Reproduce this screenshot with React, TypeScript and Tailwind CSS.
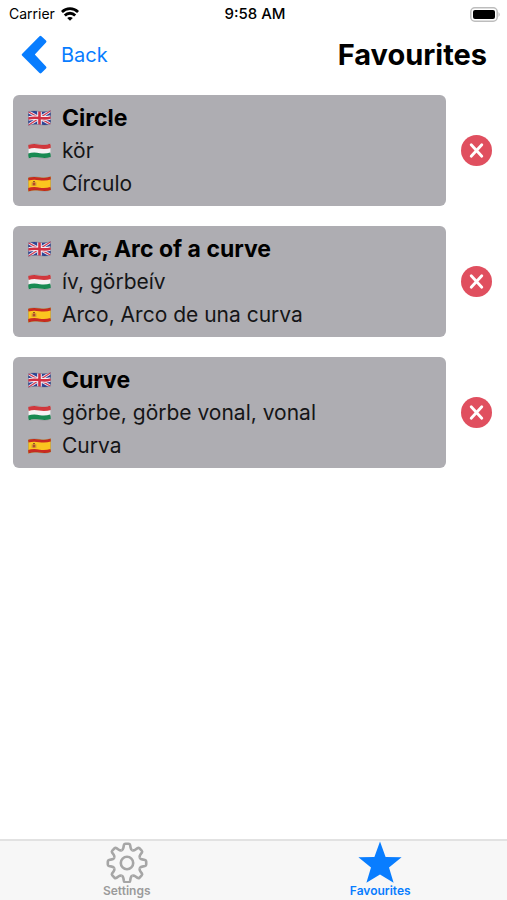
import React from "react";

type Language = "en" | "hu" | "es";

interface Favourite {
  id: number;
  en: string;
  hu: string;
  es: string;
}

const favourites: Favourite[] = [
  { id: 1, en: "Circle", hu: "kör", es: "Círculo" },
  { id: 2, en: "Arc, Arc of a curve", hu: "ív, görbeív", es: "Arco, Arco de una curva" },
  { id: 3, en: "Curve", hu: "görbe, görbe vonal, vonal", es: "Curva" },
];

const languages: Language[] = ["en", "hu", "es"];

// outline of a waving flag, shared by all three
const WAVE = "M0.3 1.8 C4 0.6 7.5 0.7 11.5 1.4 S19.5 1.8 22.7 0.6 V14 C19 15.4 15.5 15.3 11.5 14.6 S3.5 14.2 0.3 15.4 Z";

const Flag = ({ language, id }: { language: Language; id: string }) => {
  return (
    <svg viewBox="0 0 23 16" className="h-4 w-[23px] shrink-0" aria-hidden="true">
      <clipPath id={id}>
        <path d={WAVE} />
      </clipPath>
      <g clipPath={`url(#${id})`}>
        {language === "en" && (
          <>
            <rect width="23" height="16" fill="#2f4595" />
            <path d="M0 1.5 L23 14.5 M23 0.5 L0 15.5" stroke="#e9e6f0" strokeWidth="3" />
            <path d="M0 1.5 L23 14.5 M23 0.5 L0 15.5" stroke="#d13b50" strokeWidth="1.2" />
            <path d="M11.5 0 V16 M0 8.6 C4 7.4 7.5 7.5 11.5 8 S19.5 8.6 23 7.4" stroke="#f1eef5" strokeWidth="4.6" fill="none" />
            <path d="M11.5 0 V16 M0 8.6 C4 7.4 7.5 7.5 11.5 8 S19.5 8.6 23 7.4" stroke="#d02f43" strokeWidth="2.6" fill="none" />
          </>
        )}
        {language === "hu" && (
          <>
            <rect width="23" height="16" fill="#f4f3f4" />
            <path d="M0 3.8 C4 2.6 7.5 2.7 11.5 3.4 S19.5 3.8 23 2.6" stroke="#d2383d" strokeWidth="4.4" fill="none" />
            <path d="M0 13 C4 11.8 7.5 11.9 11.5 12.6 S19.5 13 23 11.8" stroke="#188a52" strokeWidth="5" fill="none" />
          </>
        )}
        {language === "es" && (
          <>
            <rect width="23" height="16" fill="#fbc51f" />
            <path d="M0 3 C4 1.8 7.5 1.9 11.5 2.6 S19.5 3 23 1.8" stroke="#c92a22" strokeWidth="3.2" fill="none" />
            <path d="M0 13.8 C4 12.6 7.5 12.7 11.5 13.4 S19.5 13.8 23 12.6" stroke="#c92a22" strokeWidth="3.6" fill="none" />
            <path d="M4.2 6.4 V10 M7.8 6.4 V10" stroke="#a77b4a" strokeWidth="0.7" />
            <path d="M4.8 6.4 H7.2 V9 Q6 10.6 4.8 9 Z" fill="#b5442c" />
            <path d="M5 5.5 H7" stroke="#8d5a2a" strokeWidth="1" />
          </>
        )}
      </g>
      <path d={WAVE} fill="none" stroke="#000" strokeOpacity="0.2" strokeWidth="0.6" />
    </svg>
  );
};

const GearIcon = () => {
  return (
    <svg viewBox="-21 -22 42 42" className="size-[42px]" fill="none" stroke="#a6a6a6" strokeWidth="2.6" aria-hidden="true">
      {[0, 45, 90, 135, 180, 225, 270, 315].map((angle) => (
        <path
          key={angle}
          transform={`rotate(${angle})`}
          d="M-5.3 -12.8 C-4.2 -13.3 -3.8 -14 -3.6 -15.2 L-3.1 -18 Q-2.8 -19.2 -1.6 -19.2 H1.6 Q2.8 -19.2 3.1 -18 L3.6 -15.2 C3.8 -14 4.2 -13.3 5.3 -12.8"
        />
      ))}
      <circle r="6.2" />
    </svg>
  );
};

const StatusBar = () => {
  return (
    <div className="grid h-7 grid-cols-3 items-center pr-[6px] pl-[9px] text-[14px] leading-5">
      <div className="flex items-center gap-[6px]">
        <span>Carrier</span>
        <svg viewBox="0 0 18 14" className="h-[14px] w-[18px]" fill="none" stroke="#000" strokeWidth="2.8" aria-label="Wi-Fi">
          <path d="M0.9 5 C5.4 0.4 12.6 0.4 17.1 5" />
          <path d="M3.8 8.4 C6.7 5.5 11.3 5.5 14.2 8.4" />
          <path d="M9 13.8 L6.2 11 C7.8 9.5 10.2 9.5 11.8 11 Z" fill="#000" stroke="none" />
        </svg>
      </div>
      <span className="text-center text-[15px] font-medium">9:58 AM</span>
      <svg viewBox="0 0 31 15" className="h-[15px] w-[31px] justify-self-end" aria-label="Battery full">
        <rect x="0.8" y="0.8" width="26.4" height="13.4" rx="4" fill="#fff" stroke="#bdbdbd" strokeWidth="1.5" />
        <rect x="3" y="3" width="22" height="9" rx="2" fill="#000" />
        <path d="M28.5 5 Q31 7.5 28.5 10 Z" fill="#bdbdbd" />
      </svg>
    </div>
  );
};

const Header = () => {
  return (
    <header className="flex h-[53px] items-center justify-between pr-5 pl-[21px]">
      <button type="button" className="flex items-center gap-[14px] text-[20px] leading-6 text-[#087dff]">
        <svg viewBox="0 0 26 40" className="h-10 w-[26px]" fill="#087dff" aria-hidden="true">
          <path d="M1 19 L18.5 1.2 Q19.5 0.4 20.4 1.2 L25 5.6 Q26 6.6 25 7.6 L13.8 19.4 L25 31.4 Q26 32.4 25 33.4 L20.4 38 Q19.5 38.8 18.5 38 L1 20.6 Q0.3 19.8 1 19 Z" />
        </svg>
        Back
      </button>
      <h1 className="text-[29px] leading-9 font-bold">Favourites</h1>
    </header>
  );
};

const FavouriteCard = ({ item }: { item: Favourite }) => {
  return (
    <li className="flex items-center gap-[15px]">
      <div className="flex-1 rounded-md bg-[#aeadb2] px-[15px] py-[6px]">
        {languages.map((language) => (
          <div key={language} className="flex h-[33px] items-center gap-[11px]">
            <Flag language={language} id={`flag-${language}-${item.id}`} />
            <p lang={language} className={language === "en" ? "text-[23px] leading-7 font-bold" : "text-[21px] leading-7 text-[#151517]"}>
              {item[language]}
            </p>
          </div>
        ))}
      </div>
      <button type="button" aria-label={`Remove ${item.en}`} className="shrink-0">
        <svg viewBox="0 0 31 31" className="size-[31px]" aria-hidden="true">
          <circle cx="15.5" cy="15.5" r="15.5" fill="#e04f5f" />
          <path d="M10.2 9.7 L20.8 21.3 M20.8 9.7 L10.2 21.3" stroke="#fff" strokeWidth="2.8" strokeLinecap="round" />
        </svg>
      </button>
    </li>
  );
};

const TabBar = () => {
  return (
    <nav className="grid h-[61px] grid-cols-2 border-t-2 border-[#e2e2e2] bg-[#f7f7f7] text-[12px] leading-4 font-semibold">
      <a href="#settings" className="flex flex-col items-center text-[#9b9b9b]">
        <GearIcon />
        Settings
      </a>
      <a href="#favourites" aria-current="page" className="flex flex-col items-center text-[#087dff]">
        <svg viewBox="0 0 44 42" className="h-[42px] w-11" fill="currentColor" aria-hidden="true">
          <path d="M22 0.6 L27.6 16 L43.6 16.2 L31 26.4 L35.6 41.8 L22 33.4 L8.4 41.8 L13 26.4 L0.4 16.2 L16.4 16 Z" />
        </svg>
        Favourites
      </a>
    </nav>
  );
};

const App = () => {
  return (
    <div className="flex min-h-screen flex-col bg-white font-['Inter','Liberation_Sans',sans-serif] text-black">
      <StatusBar />
      <Header />
      <main className="flex-1 pt-[14px] pr-[15px] pl-[13px]">
        <ul className="flex flex-col gap-5">
          {favourites.map((item) => (
            <FavouriteCard key={item.id} item={item} />
          ))}
        </ul>
      </main>
      <TabBar />
    </div>
  );
};

export default App;
